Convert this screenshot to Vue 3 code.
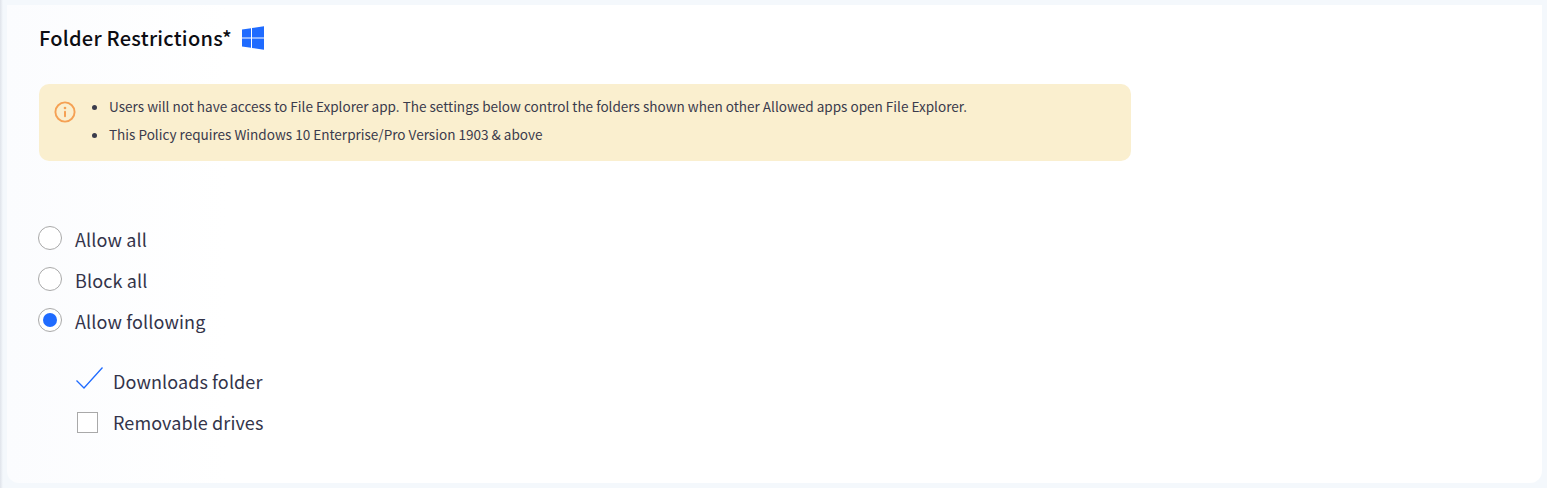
<script setup>
const notes = [
  'Users will not have access to File Explorer app. The settings below control the folders shown when other Allowed apps open File Explorer.',
  'This Policy requires Windows 10 Enterprise/Pro Version 1903 & above'
]
const radios = [
  { label: 'Allow all', on: false },
  { label: 'Block all', on: false },
  { label: 'Allow following', on: true }
]
</script>

<template>
  <div class="page">
    <section class="card">
      <header class="head">
        <h2>Folder Restrictions*</h2>
        <svg class="win" viewBox="0 0 22 24" width="22" height="24" aria-hidden="true">
          <path fill="#1f6bff" d="M0 3.6 9 2.3v9.1H0zM10 2.100 22 .2v11.2H10zM0 12.600h9v9.200L0 20.500zM10 12.600h12v11.200l-12-1.900z"/>
        </svg>
      </header>

      <div class="alert">
        <svg class="info" viewBox="0 0 22 22" width="22" height="22" aria-hidden="true">
          <circle cx="11" cy="11" r="9.600" fill="none" stroke="#f5a154" stroke-width="1.900"/>
          <circle cx="11" cy="7" r="1.300" fill="#f5a154"/>
          <rect x="10" y="9.800" width="2" height="6.400" rx="1" fill="#f5a154"/>
        </svg>
        <ul>
          <li v-for="n in notes" :key="n">{{ n }}</li>
        </ul>
      </div>

      <div class="radios">
        <label v-for="r in radios" :key="r.label" class="radio">
          <span class="dot" :class="{ on: r.on }"></span>
          <span class="txt">{{ r.label }}</span>
        </label>
      </div>

      <div class="checks">
        <label class="check">
          <svg class="tick" viewBox="0 0 28 24" width="28" height="24" aria-hidden="true">
            <path d="M1.500 14.500 9 22 27.500 1.500" fill="none" stroke="#1f6bff" stroke-width="1.300"/>
          </svg>
          <span class="txt-low">Downloads folder</span>
        </label>
        <label class="check">
          <span class="box"></span>
          <span>Removable drives</span>
        </label>
      </div>
    </section>
  </div>
</template>

<style>
html, body { margin: 0; background: #f4f8fc; }
</style>

<style scoped>
.page {
  width: 1547px;
  height: 488px;
  box-sizing: border-box;
  padding: 5px 5px 5px 7px;
  background: linear-gradient(90deg, #dfe3ea 0, #f4f8fc 3px);
  font-family: "Noto Sans CJK SC", "Noto Sans", sans-serif;
}
.card {
  height: 478px;
  box-sizing: border-box;
  padding: 18px 0 0 31px;
  background: linear-gradient(90deg, #fbfcfe 0, #ffffff 220px);
  border-radius: 0 0 12px 12px;
}
.head {
  display: flex;
  align-items: center;
  gap: 10px;
  height: 30px;
}
h2 {
  margin: 0 0 0 1px;
  font-size: 20px;
  line-height: 30px;
  font-weight: 500;
  letter-spacing: 0.25px;
  color: #0d0d12;
}
.win { margin-top: -1px; }
.alert {
  display: flex;
  width: 1092px;
  height: 77px;
  box-sizing: border-box;
  margin: 31px 0 0 1px;
  padding: 8px 0 0 15px;
  background: #faefcf;
  border-radius: 10px;
}
.info { margin-top: 9px; flex: none; }
ul {
  margin: 0;
  padding: 0 0 0 33px;
  font-size: 13.560px;
  line-height: 28px;
  color: #3a3b4c;
}
.radios {
  display: flex;
  flex-direction: column;
  gap: 17px;
  margin-top: 65px;
}
.radio {
  display: flex;
  align-items: center;
  gap: 13px;
  height: 24px;
  font-size: 18px;
  line-height: 24px;
  letter-spacing: 0.12px;
  color: #33344a;
}
.txt { padding-top: 2px; }
.txt-low { padding-top: 5px; }
.dot {
  position: relative;
  width: 24px;
  height: 24px;
  box-sizing: border-box;
  border: 1px solid #a9a9a9;
  border-radius: 50%;
  background: #fff;
}
.dot.on::after {
  content: "";
  position: absolute;
  inset: 4px;
  border-radius: 50%;
  background: #1f6bff;
}
.checks {
  display: flex;
  flex-direction: column;
  gap: 20px;
  margin: 34px 0 0 37px;
}
.check {
  display: flex;
  align-items: center;
  gap: 10px;
  height: 24px;
  font-size: 18px;
  line-height: 24px;
  letter-spacing: 0.1px;
  color: #33344a;
}
.tick { flex: none; }
.box {
  width: 21px;
  height: 21px;
  box-sizing: border-box;
  margin: 0 5px 0 2px;
  border: 1px solid #a9a9a9;
  background: #fff;
}
</style>
